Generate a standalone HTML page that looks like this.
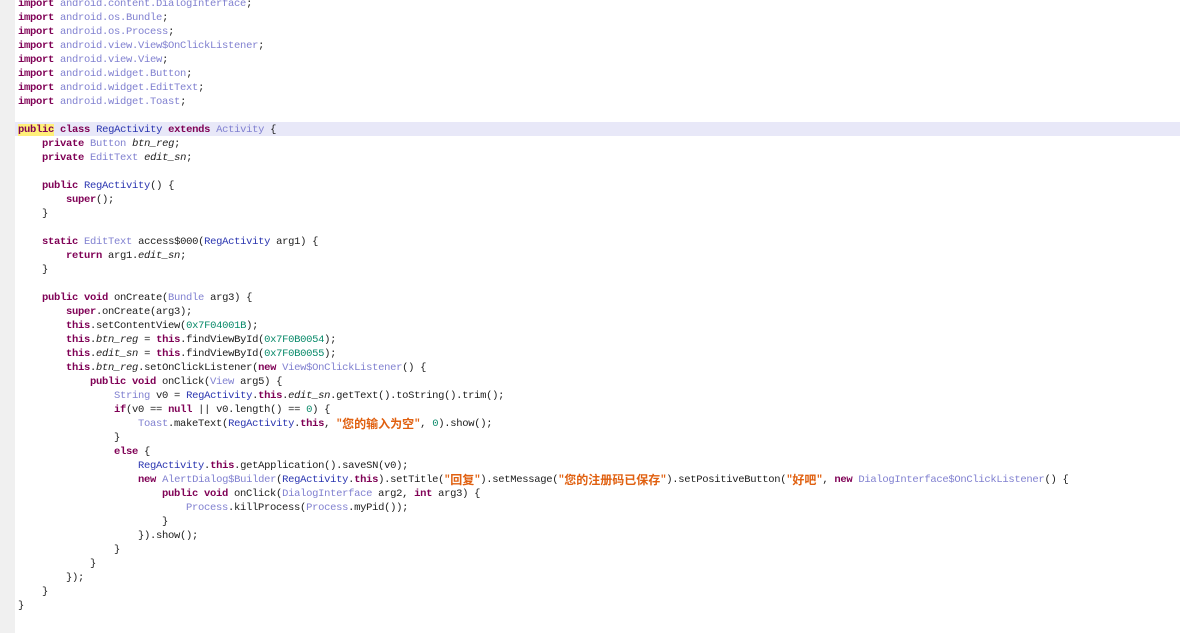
<!DOCTYPE html>
<html><head><meta charset="utf-8"><style>
html,body{margin:0;padding:0;background:#fff;width:1180px;height:633px;overflow:hidden}
.g{position:absolute;left:0;top:0;width:15px;height:633px;background:#f0f0f0}
.hl{position:absolute;left:15px;top:122px;width:1165px;height:14px;background:#e8e8f8}
pre{position:absolute;left:18px;top:-3px;margin:0;font:10.5px/14px "Liberation Mono","Noto Sans CJK SC",monospace;letter-spacing:-0.3px;color:#202020;white-space:pre}
.k{color:#7f0055;font-weight:bold}
.t{color:#8080d0}
.c{color:#2a35b0}
.f{font-style:italic}
.n{color:#0a8a6a}
.s{color:#e06010;font-weight:bold}
.z{font-size:12px;font-family:"Noto Sans CJK SC",sans-serif;display:inline-block;height:14px;line-height:14px;vertical-align:top;letter-spacing:0}
.cur{background:#fff07a}
</style></head><body>
<div class="g"></div><div class="hl"></div>
<pre><span class="k">import</span> <span class="t">android.content.DialogInterface</span>;
<span class="k">import</span> <span class="t">android.os.Bundle</span>;
<span class="k">import</span> <span class="t">android.os.Process</span>;
<span class="k">import</span> <span class="t">android.view.View$OnClickListener</span>;
<span class="k">import</span> <span class="t">android.view.View</span>;
<span class="k">import</span> <span class="t">android.widget.Button</span>;
<span class="k">import</span> <span class="t">android.widget.EditText</span>;
<span class="k">import</span> <span class="t">android.widget.Toast</span>;

<span class="k"><span class="cur">public</span></span> <span class="k">class</span> <span class="c">RegActivity</span> <span class="k">extends</span> <span class="t">Activity</span> {
    <span class="k">private</span> <span class="t">Button</span> <span class="f">btn_reg</span>;
    <span class="k">private</span> <span class="t">EditText</span> <span class="f">edit_sn</span>;

    <span class="k">public</span> <span class="c">RegActivity</span>() {
        <span class="k">super</span>();
    }

    <span class="k">static</span> <span class="t">EditText</span> access$000(<span class="c">RegActivity</span> arg1) {
        <span class="k">return</span> arg1.<span class="f">edit_sn</span>;
    }

    <span class="k">public void</span> onCreate(<span class="t">Bundle</span> arg3) {
        <span class="k">super</span>.onCreate(arg3);
        <span class="k">this</span>.setContentView(<span class="n">0x7F04001B</span>);
        <span class="k">this</span>.<span class="f">btn_reg</span> = <span class="k">this</span>.findViewById(<span class="n">0x7F0B0054</span>);
        <span class="k">this</span>.<span class="f">edit_sn</span> = <span class="k">this</span>.findViewById(<span class="n">0x7F0B0055</span>);
        <span class="k">this</span>.<span class="f">btn_reg</span>.setOnClickListener(<span class="k">new</span> <span class="t">View$OnClickListener</span>() {
            <span class="k">public void</span> onClick(<span class="t">View</span> arg5) {
                <span class="t">String</span> v0 = <span class="c">RegActivity</span>.<span class="k">this</span>.<span class="f">edit_sn</span>.getText().toString().trim();
                <span class="k">if</span>(v0 == <span class="k">null</span> || v0.length() == <span class="n">0</span>) {
                    <span class="t">Toast</span>.makeText(<span class="c">RegActivity</span>.<span class="k">this</span>, <span class="s">"<span class="z">您的输入为空</span>"</span>, <span class="n">0</span>).show();
                }
                <span class="k">else</span> {
                    <span class="c">RegActivity</span>.<span class="k">this</span>.getApplication().saveSN(v0);
                    <span class="k">new</span> <span class="t">AlertDialog$Builder</span>(<span class="c">RegActivity</span>.<span class="k">this</span>).setTitle(<span class="s">"<span class="z">回复</span>"</span>).setMessage(<span class="s">"<span class="z">您的注册码已保存</span>"</span>).setPositiveButton(<span class="s">"<span class="z">好吧</span>"</span>, <span class="k">new</span> <span class="t">DialogInterface$OnClickListener</span>() {
                        <span class="k">public void</span> onClick(<span class="t">DialogInterface</span> arg2, <span class="k">int</span> arg3) {
                            <span class="t">Process</span>.killProcess(<span class="t">Process</span>.myPid());
                        }
                    }).show();
                }
            }
        });
    }
}</pre>
</body></html>
